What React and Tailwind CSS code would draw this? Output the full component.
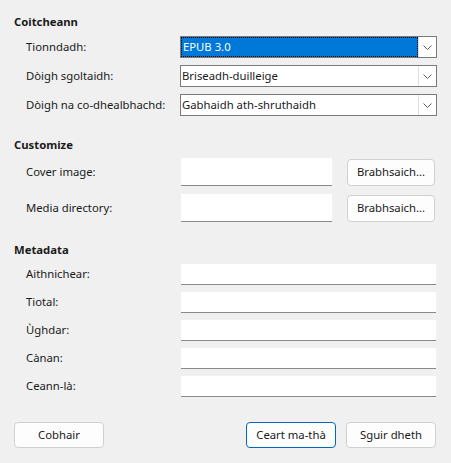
function Chevron() {
  return (
    <svg width="9" height="5" viewBox="0 0 9 5" className="block">
      <path d="M0.5 0.5 L4.5 4.5 L8.5 0.5" fill="none" stroke="#606060" strokeWidth="1" />
    </svg>
  );
}

function Combo({ value, selected }) {
  return (
    <div className="flex h-[22px] w-[257px] border border-[#7a7a7a] bg-white">
      <div className="flex-1 p-0">
        {selected ? (
          <div className="h-full border border-dotted border-black bg-[#0078d7] pl-px leading-[18px] text-white">
            {value}
          </div>
        ) : (
          <div className="h-full pl-[1px] leading-[20px]">{value}</div>
        )}
      </div>
      <div className="flex w-[18px] items-center justify-center border-l border-[#e0e0e0] bg-white">
        <Chevron />
      </div>
    </div>
  );
}

function Field({ width, height }) {
  return <div className={`${width} ${height} ml-px border-b border-[#8a8a8a] bg-white`} />;
}

function Button({ children, primary, className = '' }) {
  return (
    <div
      className={`flex items-center justify-center rounded-[4px] border bg-[#fdfdfd] ${
        primary ? 'border-[#0067c0]' : 'border-[#d0d0d0]'
      } ${className}`}
    >
      {children}
    </div>
  );
}

function Row({ label, children, className = '' }) {
  return (
    <div className={`flex items-center ${className}`}>
      <div className="w-[166px] pl-3">{label}</div>
      {children}
    </div>
  );
}

export default function App() {
  const metadata = ['Aithnichear:', 'Tiotal:', 'Ùghdar:', 'Cànan:', 'Ceann-là:'];

  return (
    <div
      className="flex h-[463px] w-[451px] flex-col bg-[#f0f0f0] pl-[14px] text-[11.3px] text-[#1a1a1a]"
      style={{ fontFamily: '"Noto Sans", "Open Sans", sans-serif' }}
    >
      <div className="mt-[14px] h-4 font-bold leading-4">Coitcheann</div>
      <div className="mt-[6px] flex flex-col gap-[7px]">
        <Row label="Tionndadh:">
          <Combo value="EPUB 3.0" selected />
        </Row>
        <Row label="Dòigh sgoltaidh:">
          <Combo value="Briseadh-duilleige" />
        </Row>
        <Row label="Dòigh na co-dhealbhachd:">
          <Combo value="Gabhaidh ath-shruthaidh" />
        </Row>
      </div>

      <div className="mt-[21px] h-4 font-bold leading-4">Customize</div>
      <div className="mt-[5px] flex flex-col gap-[8px]">
        {['Cover image:', 'Media directory:'].map((label) => (
          <Row key={label} label={label}>
            <Field width="w-[151px]" height="h-[28px]" />
            <Button className="ml-[15px] h-[27px] w-[88px]">Brabhsaich...</Button>
          </Row>
        ))}
      </div>

      <div className="mt-[20px] h-4 font-bold leading-4">Metadata</div>
      <div className="mt-[6px] flex flex-col gap-[7px]">
        {metadata.map((label) => (
          <Row key={label} label={label}>
            <Field width="w-[255px]" height="h-[21px]" />
          </Row>
        ))}
      </div>

      <div className="mt-[25px] flex pr-[15px]">
        <Button className="h-[26px] w-[90px]">Cobhair</Button>
        <div className="flex-1" />
        <Button primary className="h-[26px] w-[90px]">
          Ceart ma-thà
        </Button>
        <Button className="ml-[10px] h-[26px] w-[90px]">Sguir dheth</Button>
      </div>
    </div>
  );
}
